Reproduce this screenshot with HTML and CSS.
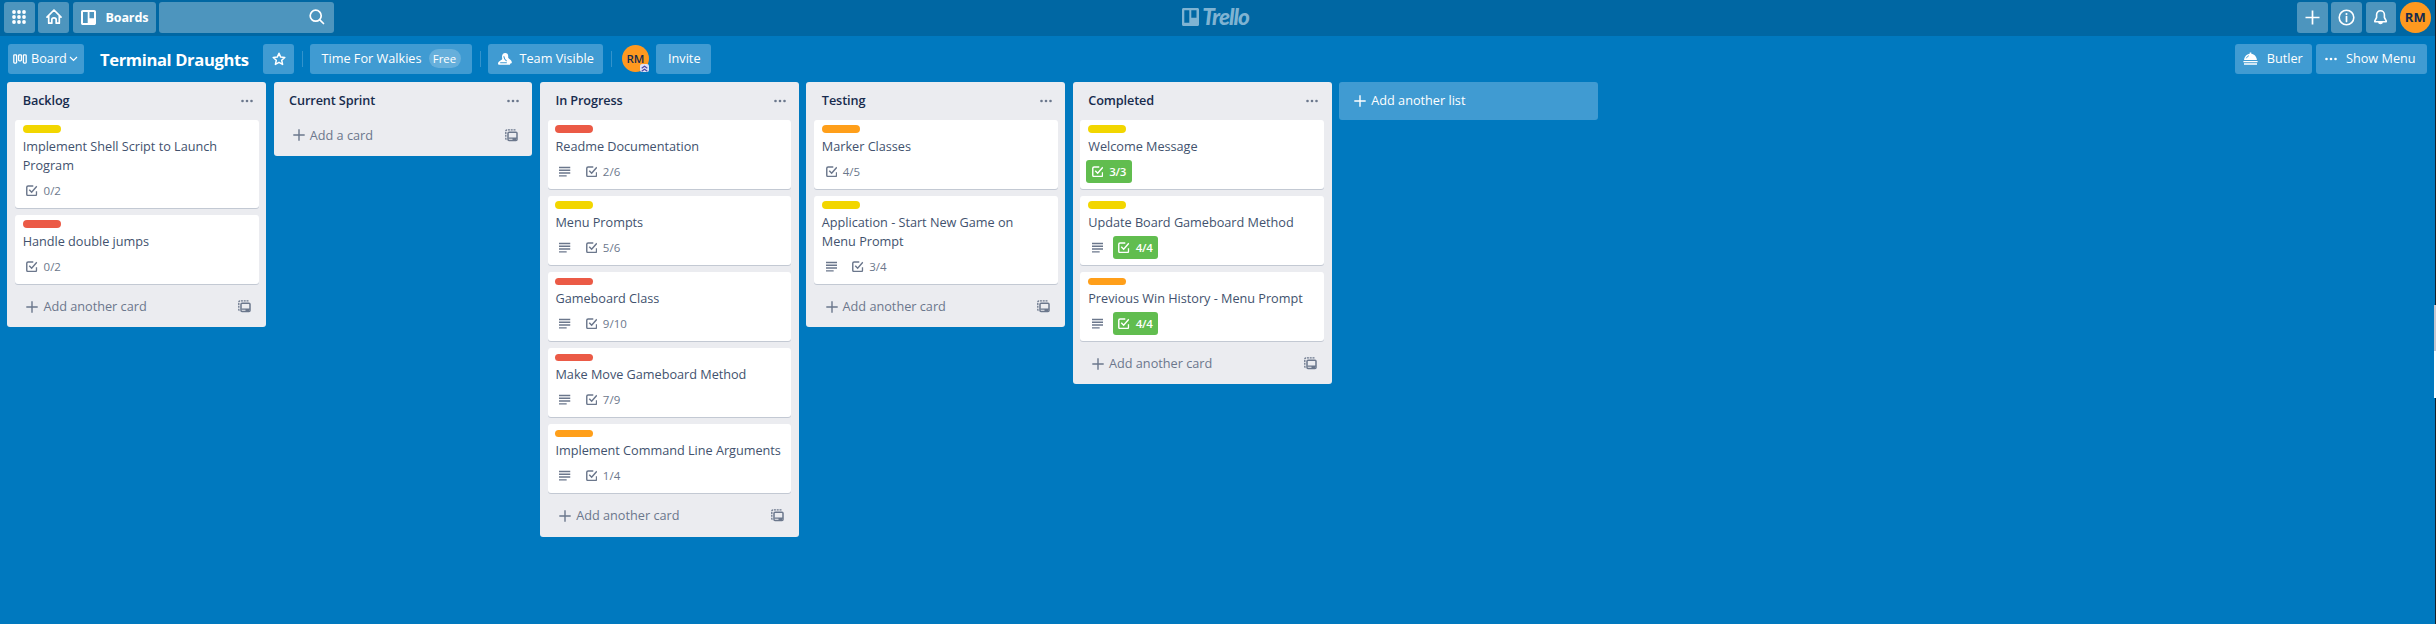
FILE: index.html
```html
<!DOCTYPE html>
<html lang="en">
<head>
<meta charset="utf-8">
<title>Terminal Draughts | Trello</title>
<link rel="stylesheet" href="styles.css">
</head>
<body>
<svg class="sprite" aria-hidden="true">
  <symbol id="check" viewBox="0 0 12 12"><path d="M7.6 1H2.2C1.4 1 .8 1.5.8 2.3v7.4c0 .8.6 1.3 1.4 1.3h7.4c.8 0 1.4-.5 1.4-1.3V6.4M3.4 5l2.5 2.6L11.3 1.4" fill="none" stroke="currentColor" stroke-width="1.5"/></symbol>
  <symbol id="desc" viewBox="0 0 12 12"><path d="M0 1.6h12M0 4.5h12M0 7.4h12M0 10.3h8" fill="none" stroke="currentColor" stroke-width="1.5"/></symbol>
  <symbol id="plus" viewBox="0 0 12 12"><path d="M6 .3v11.4M.3 6h11.4" fill="none" stroke="currentColor" stroke-width="1.4"/></symbol>
  <symbol id="dots" viewBox="0 0 12 4"><circle cx="1.5" cy="2" r="1.3" fill="currentColor"/><circle cx="6" cy="2" r="1.3" fill="currentColor"/><circle cx="10.5" cy="2" r="1.3" fill="currentColor"/></symbol>
  <symbol id="template" viewBox="0 0 13 13"><path d="M10.500.9H2C1.300.9.8 1.400.8 2v7.500c0 .7.5 1.200 1.200 1.200" fill="none" stroke="currentColor" stroke-width="1.300" stroke-dasharray="2 .8"/><rect x="3" y="3.200" width="9" height="8.300" rx="1" fill="none" stroke="currentColor" stroke-width="1.500"/><path d="M3.500 9.200h8.500M7.500 10.500h3.500" stroke="currentColor" stroke-width="1.300"/></symbol>
</svg>

<header class="topbar">
  <div class="group">
    <button class="tbtn sq"><svg width="14" height="14" viewBox="0 0 14 14" fill="currentColor"><circle cx="2" cy="2" r="1.900"/><circle cx="7" cy="2" r="1.900"/><circle cx="12" cy="2" r="1.900"/><circle cx="2" cy="7" r="1.900"/><circle cx="7" cy="7" r="1.900"/><circle cx="12" cy="7" r="1.900"/><circle cx="2" cy="12" r="1.900"/><circle cx="7" cy="12" r="1.900"/><circle cx="12" cy="12" r="1.900"/></svg></button>
    <button class="tbtn sq"><svg width="16" height="16" viewBox="0 0 16 16" fill="none" stroke="currentColor" stroke-width="1.700" stroke-linejoin="round" stroke-linecap="round"><path d="M1 8.200 8 1l7 7.200M2.700 7v7.200h3.100v-3.400c0-1.200 1-2 2.200-2s2.200.8 2.200 2v3.400h3.100V7"/></svg></button>
    <button class="tbtn boards"><svg width="15" height="15" viewBox="0 0 15 15"><path fill="currentColor" fill-rule="evenodd" d="M1.800 0h11.400c1 0 1.800.8 1.800 1.800v11.400c0 1-.8 1.800-1.800 1.800H1.800C.8 15 0 14.200 0 13.200V1.800C0 .8.8 0 1.800 0zM2 2v11h4.700V2zm6.500 0v6.200H13V2z"/></svg><span class="boards-text">Boards</span></button>
    <div class="tbtn search"><svg width="16" height="16" viewBox="0 0 16 16" fill="none" stroke="currentColor" stroke-width="1.700" stroke-linecap="round"><circle cx="6.700" cy="6.700" r="5.500"/><path d="m10.800 10.800 3.700 3.700"/></svg></div>
  </div>
  <div class="logo"><svg width="17" height="18" viewBox="0 0 17 18"><path fill="currentColor" fill-rule="evenodd" d="M1.500 0h14c.9 0 1.500.6 1.500 1.500v15c0 .9-.6 1.500-1.500 1.500h-14C.6 18 0 17.400 0 16.500v-15C0 .6.6 0 1.500 0zM2.300 2.200v12.600h5V2.200zm7 0v7.600h5.200V2.200z"/></svg><span class="logo-text">Trello</span></div>
  <div class="group">
    <button class="tbtn sq"><svg width="15" height="15" viewBox="0 0 15 15"><path d="M7.500.5v14M.5 7.500h14" stroke="currentColor" stroke-width="1.700"/></svg></button>
    <button class="tbtn sq"><svg width="17" height="17" viewBox="0 0 17 17"><circle cx="8.500" cy="8.500" r="7.300" fill="none" stroke="currentColor" stroke-width="1.600"/><path d="M8.500 7.500V12.400" stroke="currentColor" stroke-width="1.700" stroke-linecap="round"/><circle cx="8.500" cy="5" r="1.050" fill="currentColor"/></svg></button>
    <button class="tbtn sq"><svg width="15" height="17" viewBox="0 0 15 17" fill="none" stroke="currentColor" stroke-width="1.600" stroke-linejoin="round" stroke-linecap="round"><path d="M7.500 1.800c-2.400 0-3.900 1.700-3.900 4v2.700L1.800 11.800v1h11.400v-1L11.400 8.500V5.800c0-2.300-1.500-4-3.900-4zM5.800 13.200c.2 1.600 3.200 1.600 3.400 0"/></svg></button>
    <div class="avatar big">RM</div>
  </div>
</header>

<nav class="boardbar">
  <button class="bbtn view"><svg width="14" height="10" viewBox="0 0 14 10" fill="none" stroke="currentColor" stroke-width="1.300"><rect x=".8" y=".8" width="2.800" height="8.300" rx=".8"/><rect x="5.600" y=".8" width="2.800" height="6" rx=".8"/><rect x="10.400" y=".8" width="2.800" height="8.300" rx=".8"/></svg><span class="t-board">Board</span><svg width="9" height="6" viewBox="0 0 9 6"><path d="m1 1 3.500 3.500L8 1" fill="none" stroke="currentColor" stroke-width="1.200"/></svg></button>
  <h1 class="board-title">Terminal Draughts</h1>
  <button class="bbtn star"><svg width="14" height="14" viewBox="0 0 14 14"><path d="m7 1.300 1.700 3.800 4.100.4-3.100 2.800.9 4.100L7 10.300l-3.600 2.100.9-4.100L1.200 5.500l4.100-.4z" fill="none" stroke="currentColor" stroke-width="1.500" stroke-linejoin="round"/></svg></button>
  <i class="divider"></i>
  <button class="bbtn team"><span class="t-team">Time For Walkies</span><span class="free">Free</span></button>
  <i class="divider"></i>
  <button class="bbtn visible"><svg width="14" height="12" viewBox="0 0 14 12"><path d="M7.200 0c1.900 0 3.100 1.400 3 3.200 0 .9-.2 1.500.4 2.100.9.900 2.900 1.700 3.200 3.700.2 1-.4 1.600-1.500 1.600l-.4 1.200H1.500C.4 11.800 0 11.300 0 10.400c.2-2.400 3.300-2.900 4.100-4.200.3-.6-.1-1.300-.1-2.400C4 1.600 5.200 0 7.200 0z" fill="currentColor"/><path d="M5.800 3.300C6 5.500 7.300 7 8.600 8.100M2.200 9.800h6.600" fill="none" stroke="#409bd2" stroke-width="1.100"/></svg><span class="t-visible">Team Visible</span></button>
  <i class="divider"></i>
  <div class="avatar small">RM<span class="admin"><svg width="7" height="7" viewBox="0 0 7 7"><path d="m.7 3.300 2.800-2 2.800 2M.7 6.200l2.800-2 2.800 2" fill="none" stroke="#4a46a6" stroke-width="1.100"/></svg></span></div>
  <button class="bbtn invite"><span class="t-invite">Invite</span></button>
  <button class="bbtn butler"><svg width="15" height="13" viewBox="0 0 15 13" fill="currentColor"><path d="M6.700 1.800V.5h1.600v1.300c3.100.4 5.400 2.900 5.600 6.200H1.100c.2-3.300 2.500-5.800 5.600-6.200zM.4 9h14.200v1.300H.4zM1 11.200h13v1.500H1z"/><path d="M3.300 6.300c.5-1.300 1.400-2.200 2.600-2.600" stroke="#409bd2" stroke-width=".9" fill="none"/></svg><span class="t-butler">Butler</span></button>
  <button class="bbtn menu"><svg width="12" height="4"><use href="#dots"/></svg><span class="t-menu">Show Menu</span></button>
</nav>

<main class="lists">
  <section class="list">
    <header class="list-head"><h2>Backlog</h2><svg class="more"><use href="#dots"/></svg></header>
    <article class="card"><i class="label yellow"></i><p>Implement Shell Script to Launch Program</p><div class="badges"><span class="badge"><svg><use href="#check"/></svg>0/2</span></div></article>
    <article class="card"><i class="label red"></i><p>Handle double jumps</p><div class="badges"><span class="badge"><svg><use href="#check"/></svg>0/2</span></div></article>
    <footer class="add"><svg class="plus"><use href="#plus"/></svg><span>Add another card</span><svg class="tpl"><use href="#template"/></svg></footer>
  </section>
  <section class="list">
    <header class="list-head"><h2>Current Sprint</h2><svg class="more"><use href="#dots"/></svg></header>
    <footer class="add empty"><svg class="plus"><use href="#plus"/></svg><span>Add a card</span><svg class="tpl"><use href="#template"/></svg></footer>
  </section>
  <section class="list">
    <header class="list-head"><h2>In Progress</h2><svg class="more"><use href="#dots"/></svg></header>
    <article class="card"><i class="label red"></i><p>Readme Documentation</p><div class="badges"><span class="badge"><svg><use href="#desc"/></svg></span><span class="badge"><svg><use href="#check"/></svg>2/6</span></div></article>
    <article class="card"><i class="label yellow"></i><p>Menu Prompts</p><div class="badges"><span class="badge"><svg><use href="#desc"/></svg></span><span class="badge"><svg><use href="#check"/></svg>5/6</span></div></article>
    <article class="card"><i class="label red"></i><p>Gameboard Class</p><div class="badges"><span class="badge"><svg><use href="#desc"/></svg></span><span class="badge"><svg><use href="#check"/></svg>9/10</span></div></article>
    <article class="card"><i class="label red"></i><p>Make Move Gameboard Method</p><div class="badges"><span class="badge"><svg><use href="#desc"/></svg></span><span class="badge"><svg><use href="#check"/></svg>7/9</span></div></article>
    <article class="card"><i class="label orange"></i><p>Implement Command Line Arguments</p><div class="badges"><span class="badge"><svg><use href="#desc"/></svg></span><span class="badge"><svg><use href="#check"/></svg>1/4</span></div></article>
    <footer class="add"><svg class="plus"><use href="#plus"/></svg><span>Add another card</span><svg class="tpl"><use href="#template"/></svg></footer>
  </section>
  <section class="list">
    <header class="list-head"><h2>Testing</h2><svg class="more"><use href="#dots"/></svg></header>
    <article class="card"><i class="label orange"></i><p>Marker Classes</p><div class="badges"><span class="badge"><svg><use href="#check"/></svg>4/5</span></div></article>
    <article class="card"><i class="label yellow"></i><p>Application - Start New Game on Menu Prompt</p><div class="badges"><span class="badge"><svg><use href="#desc"/></svg></span><span class="badge"><svg><use href="#check"/></svg>3/4</span></div></article>
    <footer class="add"><svg class="plus"><use href="#plus"/></svg><span>Add another card</span><svg class="tpl"><use href="#template"/></svg></footer>
  </section>
  <section class="list">
    <header class="list-head"><h2>Completed</h2><svg class="more"><use href="#dots"/></svg></header>
    <article class="card"><i class="label yellow"></i><p>Welcome Message</p><div class="badges"><span class="badge done"><svg><use href="#check"/></svg>3/3</span></div></article>
    <article class="card"><i class="label yellow"></i><p>Update Board Gameboard Method</p><div class="badges"><span class="badge"><svg><use href="#desc"/></svg></span><span class="badge done"><svg><use href="#check"/></svg>4/4</span></div></article>
    <article class="card"><i class="label orange"></i><p>Previous Win History - Menu Prompt</p><div class="badges"><span class="badge"><svg><use href="#desc"/></svg></span><span class="badge done"><svg><use href="#check"/></svg>4/4</span></div></article>
    <footer class="add"><svg class="plus"><use href="#plus"/></svg><span>Add another card</span><svg class="tpl"><use href="#template"/></svg></footer>
  </section>
  <button class="add-list"><svg class="plus"><use href="#plus"/></svg><span>Add another list</span></button>
</main>
<div class="edge"><i class="edge-thumb"></i></div>
</body>
</html>
```
FILE: styles.css
```css
* { box-sizing: border-box; }
body {
  margin: 0;
  width: 2436px;
  height: 624px;
  overflow: hidden;
  position: relative;
  background: #0079bf;
  color: #172b4d;
  font: 12.7px/19px "Open Sans", "Noto Sans", sans-serif;
}
button { font: inherit; color: inherit; border: 0; margin: 0; padding: 0; text-align: left; white-space: nowrap; }
h1, h2, p { margin: 0; font: inherit; }
svg { display: block; flex: none; }
.sprite { position: absolute; width: 0; height: 0; }

.topbar { height: 36px; background: #0067a3; display: flex; justify-content: space-between; padding: 2px 5.500px 0 4px; color: #fff; }
.group { display: flex; gap: 3.800px; flex: 1; }
.group:last-child { justify-content: flex-end; }
.tbtn { height: 30.500px; border-radius: 3px; background: #4d95be; display: flex; align-items: center; }
.sq { width: 30.500px; justify-content: center; }
.boards { width: 83px; padding-left: 8px; }
.boards-text { font-weight: 700; font-size: 12.600px; letter-spacing: -.2px; margin-left: 10px; }
.search { width: 175px; justify-content: flex-end; padding-right: 9px; }
.logo { display: flex; color: #7fb3d2; padding: 6px 0 0; width: 70px; }
.logo-text { font: italic 900 22.500px/17px Lato, sans-serif; letter-spacing: -1px; margin-left: 3px; }
.avatar { border-radius: 50%; background: #ff991f; color: #172b4d; font-weight: 700; text-align: center; flex: none; }
.big { width: 30.500px; height: 30.500px; line-height: 30px; font-size: 13px; }

.boardbar { height: 45px; display: flex; align-items: flex-start; padding: 7.500px 9px 0 7.500px; color: #fff; }
.bbtn { height: 30.500px; border-radius: 3px; background: #409bd2; display: flex; align-items: center; flex: none; }
.view { width: 76.500px; padding-left: 5.500px; }
.t-board { margin: 0 4px; width: 34px; }
.board-title { width: 179px; padding-left: 16px; font-size: 16.600px; letter-spacing: -.38px; font-weight: 700; line-height: 31px; white-space: nowrap; }
.star { width: 31px; justify-content: center; }
.divider { width: 1px; height: 15.500px; margin: 7.500px 7.500px 0; background: #3393cc; flex: none; }
.team { width: 162px; padding-left: 11.500px; justify-content: space-between; padding-right: 11.500px; }
.free { background: #66afdb; border-radius: 10px; height: 19px; width: 32px; text-align: center; font-size: 11.400px; line-height: 19px; }
.visible { width: 115px; padding-left: 9.500px; }
.t-visible { margin-left: 8px; }
.small { position: relative; width: 27px; height: 27px; margin: 1.500px 7px 0 3px; font-size: 11.500px; line-height: 27px; font-weight: 600; }
.admin { position: absolute; right: 0; bottom: 0; width: 9px; height: 8px; background: #dfe1f2; border-radius: 2px; padding: .5px 1px; }
.invite { width: 55px; padding-left: 12px; }
.butler { width: 77px; margin-left: auto; padding-left: 7.500px; }
.t-butler { margin-left: 9px; }
.menu { width: 111px; margin-left: 3.800px; padding-left: 9px; }
.t-menu { margin-left: 9px; }

.lists { display: flex; align-items: flex-start; gap: 7.600px; padding: .5px 7.300px 0; }
.list { width: 258.800px; border-radius: 3px; background: #ebecf0; padding: 0 7.600px; flex: none; }
.list-head { height: 38.600px; display: flex; justify-content: space-between; padding: 9.900px 5.700px 0 7.800px; }
.list-head h2 { font-weight: 600; font-size: 12.700px; letter-spacing: -.12px; }
.more { width: 12px; height: 4px; margin-top: 7.500px; color: #6b778c; }
.card { background: #fff; border-radius: 3px; box-shadow: 0 1px 0 #c3c9d3; padding: 5.300px 7.600px 5.800px 7.800px; margin-bottom: 7.600px; }
.label { display: block; width: 38px; height: 7.600px; border-radius: 4px; margin-bottom: 3.900px; }
.yellow { background: #f2d600; }
.red { background: #eb5a46; }
.orange { background: #ff9f1a; }
.card p { color: #42526e; letter-spacing: -.02px; }
.badges { display: flex; gap: 3.800px; margin: 4.100px 0 0 -1.900px; }
.badge { height: 22.800px; border-radius: 3px; display: flex; align-items: center; color: #6b778c; font-size: 11.500px; padding: 0 5.600px; }
.badge svg { width: 11.500px; height: 11.500px; }
.badge:not(:first-child) svg, .badge:only-child svg { margin-right: 5.700px; }
.done { background: #61bd4f; color: #fff; font-weight: 600; letter-spacing: -.2px; }
.add { height: 36.200px; display: flex; align-items: center; color: #6b778c; padding: 0 7.300px 5.500px 11.500px; }
.card + .add { height: 36.200px; padding-bottom: 5.200px; }
.plus { width: 12px; height: 12px; margin-right: 5px; }
.tpl { width: 13px; height: 13px; margin-left: auto; }
.add-list { width: 258.800px; height: 38px; border-radius: 3px; background: #409bd2; color: #fff; display: flex; align-items: center; padding-left: 15px; }

.edge { position: absolute; right: 0; top: 0; width: 1px; height: 624px; background: #1a2028; }
.edge-thumb { position: absolute; right: 0; top: 305px; width: 2px; height: 93px; background: linear-gradient(#c9c7d0 50%, #fff 50%); }
```
